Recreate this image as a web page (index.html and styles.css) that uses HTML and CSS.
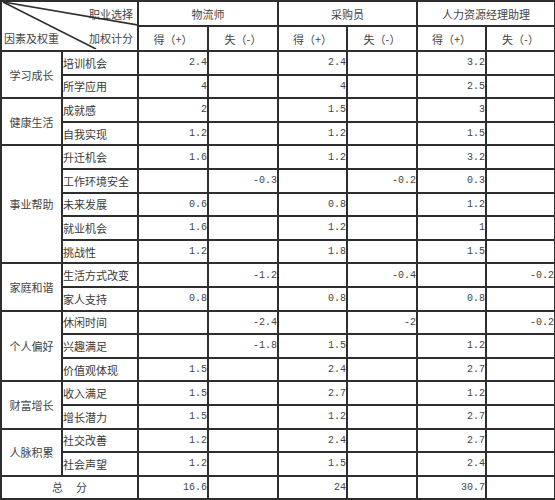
FILE: index.html
```html
<!DOCTYPE html>
<html lang="zh">
<head>
<meta charset="utf-8">
<link rel="stylesheet" href="styles.css">
</head>
<body>
<table class="grid">
  <colgroup>
    <col class="c-cat"><col class="c-sub">
    <col class="c-a"><col class="c-a"><col class="c-b"><col class="c-a"><col class="c-b"><col class="c-b">
  </colgroup>
  <thead>
    <tr class="h1">
      <th colspan="2" rowspan="2" class="diag-cell">
        <div class="diag">
          <svg class="diag-lines" width="137" height="48" viewBox="0 0 137 48">
            <line x1="2" y1="1" x2="137" y2="24" />
            <line x1="2" y1="1" x2="95" y2="48" />
          </svg>
          <span class="d-top">职业选择</span>
          <div class="d-bottom"><span>因素及权重</span><span>加权计分</span></div>
        </div>
      </th>
      <th colspan="2">物流师</th>
      <th colspan="2">采购员</th>
      <th colspan="2">人力资源经理助理</th>
    </tr>
    <tr class="h2">
      <th>得（+）</th><th>失（-）</th>
      <th>得（+）</th><th>失（-）</th>
      <th>得（+）</th><th>失（-）</th>
    </tr>
  </thead>
  <tbody>
    <tr><td rowspan="2" class="cat">学习成长</td><td class="sub">培训机会</td><td class="num">2.4</td><td class="num"></td><td class="num">2.4</td><td class="num"></td><td class="num">3.2</td><td class="num"></td></tr>
    <tr><td class="sub">所学应用</td><td class="num">4</td><td class="num"></td><td class="num">4</td><td class="num"></td><td class="num">2.5</td><td class="num"></td></tr>
    <tr><td rowspan="2" class="cat">健康生活</td><td class="sub">成就感</td><td class="num">2</td><td class="num"></td><td class="num">1.5</td><td class="num"></td><td class="num">3</td><td class="num"></td></tr>
    <tr><td class="sub">自我实现</td><td class="num">1.2</td><td class="num"></td><td class="num">1.2</td><td class="num"></td><td class="num">1.5</td><td class="num"></td></tr>
    <tr><td rowspan="5" class="cat">事业帮助</td><td class="sub">升迁机会</td><td class="num">1.6</td><td class="num"></td><td class="num">1.2</td><td class="num"></td><td class="num">3.2</td><td class="num"></td></tr>
    <tr><td class="sub">工作环境安全</td><td class="num"></td><td class="num">-0.3</td><td class="num"></td><td class="num">-0.2</td><td class="num">0.3</td><td class="num"></td></tr>
    <tr><td class="sub">未来发展</td><td class="num">0.6</td><td class="num"></td><td class="num">0.8</td><td class="num"></td><td class="num">1.2</td><td class="num"></td></tr>
    <tr><td class="sub">就业机会</td><td class="num">1.6</td><td class="num"></td><td class="num">1.2</td><td class="num"></td><td class="num">1</td><td class="num"></td></tr>
    <tr><td class="sub">挑战性</td><td class="num">1.2</td><td class="num"></td><td class="num">1.8</td><td class="num"></td><td class="num">1.5</td><td class="num"></td></tr>
    <tr><td rowspan="2" class="cat">家庭和谐</td><td class="sub">生活方式改变</td><td class="num"></td><td class="num">-1.2</td><td class="num"></td><td class="num">-0.4</td><td class="num"></td><td class="num">-0.2</td></tr>
    <tr><td class="sub">家人支持</td><td class="num">0.8</td><td class="num"></td><td class="num">0.8</td><td class="num"></td><td class="num">0.8</td><td class="num"></td></tr>
    <tr><td rowspan="3" class="cat">个人偏好</td><td class="sub">休闲时间</td><td class="num"></td><td class="num">-2.4</td><td class="num"></td><td class="num">-2</td><td class="num"></td><td class="num">-0.2</td></tr>
    <tr><td class="sub">兴趣满足</td><td class="num"></td><td class="num">-1.8</td><td class="num">1.5</td><td class="num"></td><td class="num">1.2</td><td class="num"></td></tr>
    <tr><td class="sub">价值观体现</td><td class="num">1.5</td><td class="num"></td><td class="num">2.4</td><td class="num"></td><td class="num">2.7</td><td class="num"></td></tr>
    <tr><td rowspan="2" class="cat">财富增长</td><td class="sub">收入满足</td><td class="num">1.5</td><td class="num"></td><td class="num">2.7</td><td class="num"></td><td class="num">1.2</td><td class="num"></td></tr>
    <tr><td class="sub">增长潜力</td><td class="num">1.5</td><td class="num"></td><td class="num">1.2</td><td class="num"></td><td class="num">2.7</td><td class="num"></td></tr>
    <tr><td rowspan="2" class="cat">人脉积累</td><td class="sub">社交改善</td><td class="num">1.2</td><td class="num"></td><td class="num">2.4</td><td class="num"></td><td class="num">2.7</td><td class="num"></td></tr>
    <tr><td class="sub">社会声望</td><td class="num">1.2</td><td class="num"></td><td class="num">1.5</td><td class="num"></td><td class="num">2.4</td><td class="num"></td></tr>
    <tr class="total"><td colspan="2" class="cat total-label">总分</td><td class="num">16.6</td><td class="num"></td><td class="num">24</td><td class="num"></td><td class="num">30.7</td><td class="num"></td></tr>
  </tbody>
</table>
</body>
</html>
```

FILE: styles.css
```css
html, body {
  margin: 0;
  padding: 0;
  background: #ffffff;
}

.grid {
  border-collapse: collapse;
  table-layout: fixed;
  width: 555px;
  margin: 0;
  font-family: "Noto Sans CJK SC", "Noto Sans", sans-serif;
  font-size: 11px;
  color: #3a3a3a;
}

.c-cat { width: 61px; }
.c-sub { width: 76px; }
.c-a { width: 70px; }
.c-b { width: 69px; }

.grid th,
.grid td {
  border: 2px solid #2e2e2e;
  padding: 0;
  overflow: hidden;
  white-space: nowrap;
}

.grid th {
  font-weight: 400;
  text-align: center;
  color: #444;
}

.h1, .h2 { height: 24px; }

.grid tbody tr { height: 23.6px; }

.diag-cell {
  padding: 0;
  vertical-align: top;
}

.diag {
  position: relative;
  height: 48px;
  display: flex;
  flex-direction: column;
  justify-content: space-between;
}

.diag-lines {
  position: absolute;
  left: -1px;
  top: -1px;
  stroke: #2e2e2e;
  stroke-width: 1.6;
}

.d-top {
  align-self: flex-end;
  padding: 4px 4px 0 0;
  line-height: 16px;
}

.d-bottom {
  display: flex;
  justify-content: space-between;
  padding: 0 4px 4px 2px;
  line-height: 16px;
}

.cat {
  text-align: center;
  vertical-align: middle;
  color: #444;
}

.sub {
  text-align: left;
  padding-left: 2px;
  color: #3a3a3a;
}

.num {
  text-align: right;
  padding-right: 2px;
  font-family: "Liberation Mono", "DejaVu Sans Mono", monospace;
  font-size: 10px;
  color: #444;
}

.total-label {
  letter-spacing: 13px;
  text-indent: 13px;
}
```
